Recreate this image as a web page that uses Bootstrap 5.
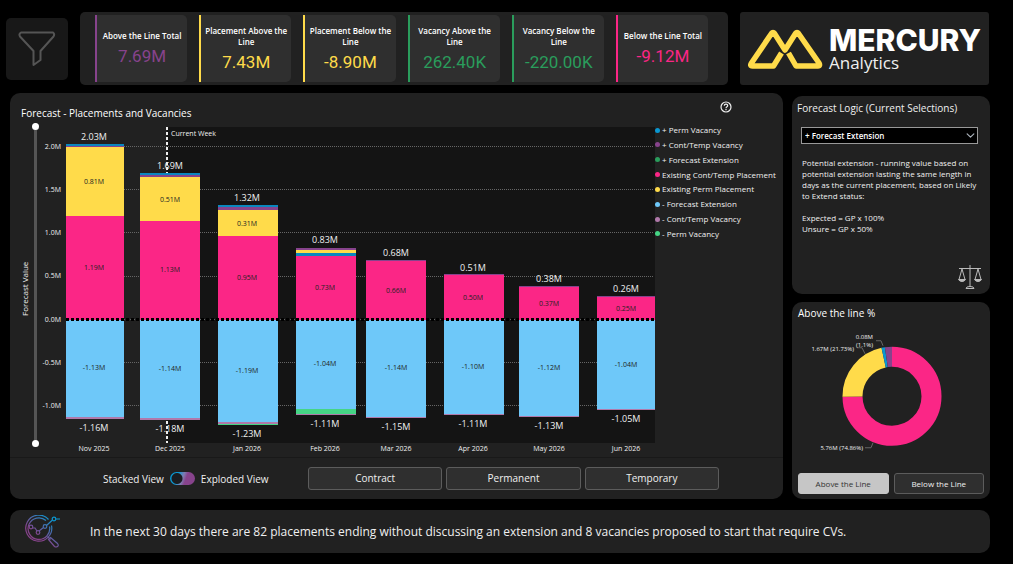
<!DOCTYPE html>
<html lang="en" data-bs-theme="dark">
<head>
<meta charset="utf-8">
<meta name="viewport" content="width=device-width, initial-scale=1">
<title>Mercury Analytics - Forecast</title>
<link href="https://cdn.jsdelivr.net/npm/bootstrap@5.3.0/dist/css/bootstrap.min.css" rel="stylesheet">
<style>
  :root {
    --panel: #212121; --tile: #2f2f2f; --plot: #141414;
    --pink: #fb2686; --yellow: #ffdb4a; --sky: #6ec8f9; --blue: #0a97d1;
    --purple: #87438c; --green: #2a9d5c; --mauve: #b079aa; --mint: #45d585;
  }
  body { background: #000; color: #f0f0f0; font-family: "Open Sans", "Noto Sans", sans-serif; font-size: 10px; line-height: 16px; }
  .page-head { padding: 12px 24px 8px 6px; gap: 12px; }
  .page-body { padding: 0 23px 0 10px; }
  .panel { background: var(--panel); border-radius: 10px; }
  .filter-btn { flex: none; width: 62px; height: 62px; background: #181818; border: 0; border-radius: 5px; padding: 0; }
  .kpis { flex: 1 1 0; min-width: 0; background: var(--panel); border-radius: 5px; padding: 3px 20px 3px 15px; gap: 12px; }
  .kpi { flex: 1 1 0; min-width: 0; min-height: 67px; background: var(--tile); border-left: 2px solid; border-radius: 0 5px 5px 0; padding: 0 1px; }
  .kpi-name { color: #fff; font-size: 8px; line-height: 11px; font-weight: 600; }
  .kpi-value { font-family: Roboto, sans-serif; font-size: 17px; line-height: 22px; margin-top: 4px; }
  .c-purple { color: var(--purple); } .c-yellow { color: var(--yellow); } .c-green { color: var(--green); } .c-pink { color: var(--pink); }
  .brand { flex: none; width: 249px; background: var(--panel); border-radius: 3px; padding: 0 8px; gap: 6px; }
  .brand-name { font-family: Inter, sans-serif; font-weight: 800; font-size: 30px; line-height: 28px; color: #fff; }
  .brand-sub { font-size: 17px; line-height: 18px; }
  .dash { display: grid; grid-template-columns: minmax(0, 1fr) 198px; gap: 9px; }
  .chart-head { height: 28px; padding: 8px 51px 0 11px; }
  .panel-title { font-size: 10px; line-height: 16px; font-weight: 400; margin: 0; }
  .chart-title { margin-top: 4px; }
  .icon-btn { background: none; border: 0; padding: 0; color: #eee; display: flex; }
  .axis-title { width: 21px; padding-right: 10px; writing-mode: vertical-rl; transform: rotate(180deg); text-align: center; font-size: 8px; line-height: 10px; }
  .zoom-col { width: 9px; display: grid; justify-items: start; padding: 2px 0 10px; }
  .zoom-range { grid-area: 1 / 1; -webkit-appearance: none; appearance: none; writing-mode: vertical-lr; direction: rtl; width: 9px; height: 324px; margin: 0; background: none; pointer-events: none; }
  .zoom-range::-webkit-slider-thumb { -webkit-appearance: none; width: 7px; height: 7px; border-radius: 50%; background: #fff; pointer-events: auto; }
  .zoom-track::-webkit-slider-runnable-track { background: linear-gradient(90deg, transparent 2px, #555 2px, #555 5px, transparent 5px); }
  .chart { flex: 1 1 0; min-width: 0; display: block; }
  .chart text { fill: #f0f0f0; font-size: 9px; text-anchor: middle; }
  .chart .tick { font-size: 7px; text-anchor: end; }
  .chart .month, .chart .note { font-size: 7px; }
  .chart .note { text-anchor: start; }
  .chart .inner { font-size: 7px; fill: #222; }
  .chart-legend { width: 128px; height: 118px; margin-top: 2px; font-size: 8px; line-height: 14px; }
  .chart-legend li { display: flex; align-items: center; gap: 2px; white-space: nowrap; }
  .dot { width: 5px; height: 5px; border-radius: 50%; background: currentColor; flex: none; }
  .chart-foot { border-top: 1px solid #191919; padding: 9px 64px 9px 93px; font-size: 10px; }
  .view-switch { gap: 6px; min-width: 205px; }
  .view-switch input { -webkit-appearance: none; appearance: none; width: 25px; height: 13px; margin: 0; border-radius: 7px;
    background: radial-gradient(circle at 7px 50%, #1a1c20 5px, transparent 6px), linear-gradient(110deg, #0a97d1 30%, #7f7bb0 50%, #87438c 62%); }
  .pill { background: var(--tile); color: #f0f0f0; border: 1px solid #5c5c5c; border-radius: 3px; font-size: 10px; line-height: 15px; padding: 3px 0; }
  .pill:hover { background: #3a3a3a; color: #fff; }
  .pill.active { background: #c6c6c6; color: #333; border-color: #c6c6c6; }
  .types { flex: 1; gap: 4px; }
  .small-pill { font-size: 8px; line-height: 15px; padding: 2px 0; }
  .side { display: grid; grid-template-rows: 1fr 1fr; gap: 8px; padding-top: 3px; }
  .logic { padding: 4px 8px 5px 5px; }
  .logic-select { background-color: #000; color: #fff; border: 1px solid #999; border-radius: 0; font-size: 8px; line-height: 12px; font-weight: 600;
    height: 17px; min-height: 0; width: 177px; margin: 11px 0 13px 4px; padding: 0 16px 0 3px; background-position: right 2px center; background-size: 9px 9px;
    --bs-form-select-bg-img: url("data:image/svg+xml,%3csvg xmlns='http://www.w3.org/2000/svg' viewBox='0 0 9 9'%3e%3cpath fill='none' stroke='%23ddd' d='M1 2.5l3.5 4 3.5-4'/%3e%3c/svg%3e"); }
  .logic-text { font-size: 8px; line-height: 11px; margin: 0 0 11px 5px; }
  .share { padding: 3px 6px 5px; }
  .share text { fill: #f0f0f0; font-size: 6px; text-anchor: end; }
  .insight { margin-top: 11px; min-height: 43px; padding: 5px 15px; gap: 30px; font-size: 12px; line-height: 18px; }
</style>
<script src="https://cdn.jsdelivr.net/npm/bootstrap@5.3.0/dist/js/bootstrap.bundle.min.js"></script>
</head>
<body>

<header class="page-head d-flex align-items-stretch">
  <button class="filter-btn align-self-center" type="button" aria-label="Filters">
    <svg width="38" height="36" viewBox="0 0 38 36" fill="none" stroke="#555" stroke-width="2" stroke-linejoin="round"><path d="M3 1.500h32q2 1.500 .5 4L22.500 20v9L15.500 34V20L2 5.500q-1.500-2.500 1-4z"/></svg>
  </button>
  <section class="kpis d-flex" aria-label="Key figures">
    <div class="kpi c-purple d-flex flex-column justify-content-center text-center"><div class="kpi-name">Above the Line Total</div><div class="kpi-value">7.69M</div></div>
    <div class="kpi c-yellow d-flex flex-column justify-content-center text-center"><div class="kpi-name">Placement Above the Line</div><div class="kpi-value">7.43M</div></div>
    <div class="kpi c-yellow d-flex flex-column justify-content-center text-center"><div class="kpi-name">Placement Below the Line</div><div class="kpi-value">-8.90M</div></div>
    <div class="kpi c-green d-flex flex-column justify-content-center text-center"><div class="kpi-name">Vacancy Above the Line</div><div class="kpi-value">262.40K</div></div>
    <div class="kpi c-green d-flex flex-column justify-content-center text-center"><div class="kpi-name">Vacancy Below the Line</div><div class="kpi-value">-220.00K</div></div>
    <div class="kpi c-pink d-flex flex-column justify-content-center text-center"><div class="kpi-name">Below the Line Total</div><div class="kpi-value">-9.12M</div></div>
  </section>
  <div class="brand d-flex align-items-center">
    <svg class="flex-shrink-0" width="75" height="42" viewBox="0 0 75 42" fill="none" stroke="#ffdb4a" stroke-width="5.500" stroke-linejoin="round"><path d="M33.500 25L25.500 38H4.500Q1.500 38 3.500 35L23.500 5.500Q25 3.500 26.500 5.500L37 22 47.500 5.500Q49 3.500 50.500 5.500L71 35Q72.500 38 70 38H48L40.500 25"/></svg>
    <div>
      <div class="brand-name">MERCURY</div>
      <div class="brand-sub">Analytics</div>
    </div>
  </div>
</header>

<div class="page-body">
  <main class="dash">
    <section class="panel d-flex flex-column">
      <div class="chart-head d-flex justify-content-between align-items-start">
        <h1 class="panel-title chart-title">Forecast - Placements and Vacancies</h1>
        <button class="icon-btn" type="button" aria-label="Help">
          <svg width="12" height="12" viewBox="0 0 12 12" fill="none" stroke="currentColor" stroke-width="1.200"><circle cx="6" cy="6" r="5"/><path d="M4.300 4.800C4.300 2.500 7.700 2.600 7.700 4.700 7.700 5.800 6 5.800 6 7.200M6 8v1.200"/></svg>
        </button>
      </div>
      <div class="d-flex align-items-start flex-grow-1">
        <div class="axis-title align-self-stretch">Forecast Value</div>
        <div class="zoom-col">
          <input class="zoom-range zoom-track" type="range" min="0" max="100" value="0" aria-label="Lower bound">
          <input class="zoom-range" type="range" min="0" max="100" value="100" aria-label="Upper bound">
        </div>
        <svg class="chart" viewBox="40 121 615 336" role="img" aria-label="Forecast value by month">
          <rect x="167" y="127" width="488" height="316" fill="#141414"/>
          <g stroke="#666" stroke-dasharray="1 1">
            <path d="M66 146.500H653M66 189.500H653M66 232.500H653M66 276.500H653M66 319.500H653M66 362.500H653M66 405.500H653"/>
          </g>
          <g fill="#fb2686">
            <path d="M66 216h58v104H66zM140 221h60v99H140zM218 236h60v84H218zM296 256h60v64H296zM366 261h60v59H366zM444 275h60v45H444zM519 287h60v33H519zM597 297h58v23H597z"/>
          </g>
          <g fill="#6ec8f9">
            <path d="M66 320h58v97H66zM140 320h60v98H140zM218 320h60v102H218zM296 320h60v89H296zM366 320h60v97H366zM444 320h60v94H444zM519 320h60v96H519zM597 320h58v89H597z"/>
          </g>
          <g fill="#ffdb4a"><path d="M66 147h58v69H66zM140 177h60v44H140zM218 210h60v26H218zM296 250h60v3H296z"/></g>
          <g fill="#0a87bf"><path d="M66 144h58v2H66zM140 173h60v2H140zM218 205h60v2H218zM296 253h60v3H296z"/></g>
          <g fill="#87438c"><path d="M66 146h58v1H66zM140 175h60v2H140zM218 207h60v3H218zM296 248h60v2H296zM366 260h60v1H366zM444 274h60v1H444zM519 286h60v1H519zM597 296h58v1H597z"/></g>
          <g fill="#b079aa"><path d="M66 417h58v2H66zM140 418h60v2H140zM218 422h60v2H218zM296 414h60v1H296zM366 417h60v1H366zM444 414h60v1H444zM519 416h60v1H519zM597 409h58v1H597z"/></g>
          <g fill="#45d585"><path d="M218 424h60v1H218zM296 409h60v5H296z"/></g>
          <path d="M66 319.500H655" stroke="#000" stroke-width="3" stroke-dasharray="3 2"/>
          <g>
            <text class="tick" x="61" y="149">2.0M</text><text class="tick" x="61" y="192">1.5M</text><text class="tick" x="61" y="235">1.0M</text><text class="tick" x="61" y="278">0.5M</text><text class="tick" x="61" y="322">0.0M</text><text class="tick" x="61" y="365">-0.5M</text><text class="tick" x="61" y="408">-1.0M</text>
          </g>
          <text x="94" y="140">2.03M</text><text x="170" y="169">1.69M</text><text x="247" y="201">1.32M</text><text x="325" y="243">0.83M</text><text x="396" y="256">0.68M</text><text x="473" y="271">0.51M</text><text x="549" y="282">0.38M</text><text x="626" y="292">0.26M</text>
          <text x="94" y="431">-1.16M</text><text x="170" y="432">-1.18M</text><text x="247" y="437">-1.23M</text><text x="325" y="427">-1.11M</text><text x="396" y="430">-1.15M</text><text x="473" y="427">-1.11M</text><text x="549" y="429">-1.13M</text><text x="626" y="422">-1.05M</text>
          <path d="M167 127V173M167 421V443" stroke="#eee" stroke-width="2" stroke-dasharray="3 2"/>
          <text class="note" x="171" y="136">Current Week</text>
          <text class="inner" x="94" y="184">0.81M</text><text class="inner" x="170" y="202">0.51M</text><text class="inner" x="247" y="226">0.31M</text>
          <text class="inner" x="94" y="270">1.19M</text><text class="inner" x="170" y="272">1.13M</text><text class="inner" x="247" y="280">0.95M</text><text class="inner" x="325" y="290">0.73M</text><text class="inner" x="396" y="293">0.66M</text><text class="inner" x="473" y="300">0.50M</text><text class="inner" x="549" y="306">0.37M</text><text class="inner" x="626" y="311">0.25M</text>
          <text class="inner" x="94" y="370">-1.13M</text><text class="inner" x="170" y="371">-1.14M</text><text class="inner" x="247" y="373">-1.19M</text><text class="inner" x="325" y="366">-1.04M</text><text class="inner" x="396" y="370">-1.14M</text><text class="inner" x="473" y="369">-1.10M</text><text class="inner" x="549" y="370">-1.12M</text><text class="inner" x="626" y="367">-1.04M</text>
          <text class="month" x="94" y="451">Nov 2025</text><text class="month" x="170" y="451">Dec 2025</text><text class="month" x="247" y="451">Jan 2026</text><text class="month" x="325" y="451">Feb 2026</text><text class="month" x="396" y="451">Mar 2026</text><text class="month" x="473" y="451">Apr 2026</text><text class="month" x="549" y="451">May 2026</text><text class="month" x="626" y="451">Jun 2026</text>
        </svg>
        <ul class="chart-legend list-unstyled d-flex flex-column justify-content-between mb-0">
          <li><span class="dot" style="color:var(--blue)"></span>+ Perm Vacancy</li>
          <li><span class="dot c-purple"></span>+ Cont/Temp Vacancy</li>
          <li><span class="dot c-green"></span>+ Forecast Extension</li>
          <li><span class="dot c-pink"></span>Existing Cont/Temp Placement</li>
          <li><span class="dot c-yellow"></span>Existing Perm Placement</li>
          <li><span class="dot" style="color:var(--sky)"></span>- Forecast Extension</li>
          <li><span class="dot" style="color:var(--mauve)"></span>- Cont/Temp Vacancy</li>
          <li><span class="dot" style="color:var(--mint)"></span>- Perm Vacancy</li>
        </ul>
      </div>
      <div class="chart-foot d-flex align-items-center">
        <div class="view-switch d-flex align-items-center">
          <label for="view">Stacked View</label>
          <input id="view" type="checkbox" role="switch">
          <label for="view">Exploded View</label>
        </div>
        <div class="types d-flex">
          <button class="btn pill flex-fill w-100" type="button">Contract</button>
          <button class="btn pill flex-fill w-100" type="button">Permanent</button>
          <button class="btn pill flex-fill w-100" type="button">Temporary</button>
        </div>
      </div>
    </section>

    <aside class="side">
      <section class="panel logic d-flex flex-column">
        <label class="panel-title" for="logic">Forecast Logic (Current Selections)</label>
        <select id="logic" class="form-select logic-select"><option>+ Forecast Extension</option></select>
        <p class="logic-text">Potential extension - running value based on potential extension lasting the same length in days as the current placement, based on Likely to Extend status:</p>
        <p class="logic-text">Expected = GP x 100%<br>Unsure = GP x 50%</p>
        <svg class="mt-auto ms-auto" width="24" height="24" viewBox="0 0 24 24" fill="none" stroke="#bbb"><path d="M12 0v22M1 3.500h22M8 23.500q0-2 4-2t4 2zM4 4L1 14.500h6zM20 4l-3 10.500h6z"/><path d="M.5 14.500h7q-1 2-3.500 2t-3.500-2zM16.500 14.500h7q-1 2-3.500 2t-3.500-2z" fill="#bbb"/></svg>
      </section>
      <section class="panel share d-flex flex-column">
        <h2 class="panel-title">Above the line %</h2>
        <svg class="flex-grow-1 w-100" viewBox="798 322 186 148" role="img" aria-label="Above the line share">
          <g fill="none" stroke-width="20" transform="rotate(-90 892 395)">
            <circle cx="892" cy="395" r="39.500" stroke="#fb2686" pathLength="10000" stroke-dasharray="7486 10000"/>
            <circle cx="892" cy="395" r="39.500" stroke="#ffdb4a" pathLength="10000" stroke-dasharray="2173 10000" stroke-dashoffset="-7486"/>
            <circle cx="892" cy="395" r="39.500" stroke="#0a97d1" pathLength="10000" stroke-dasharray="110 10000" stroke-dashoffset="-9659"/>
            <circle cx="892" cy="395" r="39.500" stroke="#87438c" pathLength="10000" stroke-dasharray="231 10000" stroke-dashoffset="-9769"/>
          </g>
          <path d="M876 339.500h5l2 5M857 346.500h5l3 6M865 446.500h6l2-5" fill="none" stroke="#666"/>
          <text x="873" y="338">0.08M</text><text x="873" y="346">(1.1%)</text><text x="854" y="350">1.67M (21.73%)</text><text x="863" y="449">5.76M (74.86%)</text>
        </svg>
        <div class="d-flex" role="group" aria-label="Line" style="gap:5px">
          <button class="btn pill small-pill active flex-fill w-100" type="button">Above the Line</button>
          <button class="btn pill small-pill flex-fill w-100" type="button">Below the Line</button>
        </div>
      </section>
    </aside>
  </main>

  <footer class="panel insight d-flex align-items-center">
    <svg class="flex-shrink-0" width="35" height="33" viewBox="0 0 35 33" fill="none" stroke="url(#lens)" stroke-width="1.200">
      <defs><linearGradient id="lens" gradientUnits="userSpaceOnUse" x1="26" y1="3" x2="12" y2="20"><stop offset="0" stop-color="#0a97d1"/><stop offset="1" stop-color="#87438c"/></linearGradient></defs>
      <path d="M23.500 4.500A13 13 0 1 0 26.500 10.500M21 5.500A10.800 10.800 0 1 0 24.500 11.500"/>
      <circle cx="6" cy="12" r="1.800"/><circle cx="13" cy="17.500" r="1.800"/><circle cx="20" cy="11.500" r="1.800"/><circle cx="29" cy="4" r="1.800"/>
      <path d="M7.500 13H10L12 16M14 16l4.500-3.500M21.500 10.500l6-5.500M31 4h4M22.500 21.500l3 3M25.500 22.500l7 6q1.500 2 0 3t-3 0l-6-7z"/>
    </svg>
    <p class="mb-0">In the next 30 days there are 82 placements ending without discussing an extension and 8 vacancies proposed to start that require CVs.</p>
  </footer>
</div>
</body>
</html>
